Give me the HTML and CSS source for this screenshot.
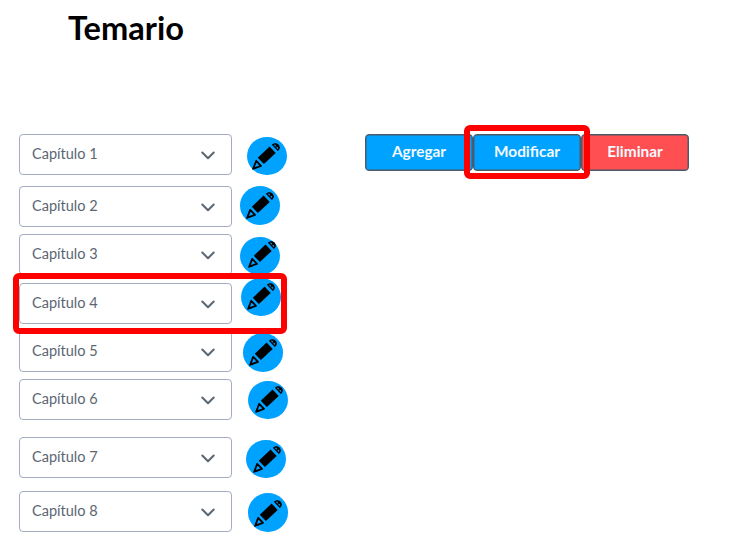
FILE: index.html
```html
<!DOCTYPE html>
<html lang="es">
<head>
<meta charset="utf-8">
<title>Temario</title>
<link rel="stylesheet" href="styles.css">
</head>
<body>
<svg width="0" height="0" class="defs">
  <symbol id="pencil" viewBox="0 0 28 27">
    <path d="M5.8 14.8 17.6 3.6 23.7 9.9 11.9 21Z"/>
    <path class="line" d="M4.2 17.8 1.3 25.6 9 22.8Z"/>
    <path d="M.2 26.8 1.8 22.6 4.8 25.2Z"/>
    <path d="M19.8 1.8C21.6 -.4 24.6 -.3 26.5 1.6 28.6 3.8 28.1 6.2 25.8 8Z"/>
    <path class="shine" d="M22.8 2.2 23.4 2.8M25 4.4 25.6 5"/>
  </symbol>
  <symbol id="chevron" viewBox="0 0 14 9"><path class="chev" d="M1.3 1.5 7 7.2 12.7 1.5"/></symbol>
</svg>
<main class="page">
  <h1 class="title">Temario</h1>
  <div class="content">
    <section class="chapters">
      <div class="row r1"><div class="select"><span>Capítulo 1</span><svg class="arrow"><use href="#chevron"/></svg></div><button class="edit" aria-label="Editar"><svg class="pencil"><use href="#pencil"/></svg></button></div>
      <div class="row r2"><div class="select"><span>Capítulo 2</span><svg class="arrow"><use href="#chevron"/></svg></div><button class="edit" aria-label="Editar"><svg class="pencil"><use href="#pencil"/></svg></button></div>
      <div class="row r3"><div class="select"><span>Capítulo 3</span><svg class="arrow"><use href="#chevron"/></svg></div><button class="edit" aria-label="Editar"><svg class="pencil"><use href="#pencil"/></svg></button></div>
      <div class="row r4"><div class="select"><span>Capítulo 4</span><svg class="arrow"><use href="#chevron"/></svg></div><button class="edit" aria-label="Editar"><svg class="pencil"><use href="#pencil"/></svg></button><div class="mark"></div></div>
      <div class="row r5"><div class="select"><span>Capítulo 5</span><svg class="arrow"><use href="#chevron"/></svg></div><button class="edit" aria-label="Editar"><svg class="pencil"><use href="#pencil"/></svg></button></div>
      <div class="row r6"><div class="select"><span>Capítulo 6</span><svg class="arrow"><use href="#chevron"/></svg></div><button class="edit" aria-label="Editar"><svg class="pencil"><use href="#pencil"/></svg></button></div>
      <div class="row r7"><div class="select"><span>Capítulo 7</span><svg class="arrow"><use href="#chevron"/></svg></div><button class="edit" aria-label="Editar"><svg class="pencil"><use href="#pencil"/></svg></button></div>
      <div class="row r8"><div class="select"><span>Capítulo 8</span><svg class="arrow"><use href="#chevron"/></svg></div><button class="edit" aria-label="Editar"><svg class="pencil"><use href="#pencil"/></svg></button></div>
    </section>
    <div class="actions">
      <button class="action">Agregar</button>
      <div class="marked"><button class="action">Modificar</button><div class="mark"></div></div>
      <button class="action danger">Eliminar</button>
    </div>
  </div>
</main>
</body>
</html>
```
FILE: styles.css
```css
* { box-sizing: border-box; }
body { margin: 0; background: #fff; font-family: Lato, sans-serif; }
.defs { display: block; }
.page { height: 544px; overflow: hidden; }
.title { margin: 0; padding: 8px 0 0 68px; height: 134px; font-size: 32.6px; line-height: 40px; font-weight: 700; color: #000; }
.content { display: flex; align-items: flex-start; padding-left: 19px; }
.chapters { width: 346px; }
.row { --gap: 15px; --drop: 2px; --px: 6px; --py: 6px; position: relative; display: flex; align-items: flex-start; height: 41px; }
.select { display: flex; align-items: center; justify-content: space-between; width: 213px; height: 41px; padding: 0 16px 2px 12px; border: 1px solid #a3adc2; border-radius: 4px; background: #fff; font-size: 14.5px; color: #5b6673; }
.arrow { width: 14px; height: 9px; margin-top: 4px; }
.chev { fill: none; stroke: #5b6673; stroke-width: 2; stroke-linecap: round; stroke-linejoin: round; }
.edit { flex: none; width: 40px; height: 38.6px; margin: var(--drop) 0 0 var(--gap); padding: var(--py) 0 0 var(--px); border: 0; border-radius: 50%; background: #00a2ff; display: flex; align-items: flex-start; justify-content: flex-start; }
.pencil { flex: none; width: 28px; height: 27px; }
.line { fill: none; stroke: #000; stroke-width: 1.8; stroke-linejoin: round; }
.shine { fill: none; stroke: #00a2ff; stroke-width: 1.2; stroke-linecap: round; }
.r1 { --gap: 14.6px; --drop: 2.6px; --px: 5.7px; --py: 6.3px; }
.r2 { --gap: 8.3px; --drop: 0px; --px: 5.4px; --py: 6.3px; margin-top: 11px; }
.r3 { --gap: 7.5px; --drop: 2.8px; --px: 8.5px; --py: 4.2px; margin-top: 7px; }
.r4 { --gap: 9.2px; --drop: -5.5px; --px: 6.1px; --py: 5.2px; margin-top: 8px; z-index: 1; }
.r5 { --gap: 10.7px; --drop: 2.2px; --px: 6px; --py: 6.3px; margin-top: 7px; }
.r6 { --gap: 16px; --drop: 1.5px; --px: 7px; --py: 5.3px; margin-top: 7px; }
.r7 { --gap: 13.8px; --drop: 2.8px; --px: 7.3px; --py: 6.2px; margin-top: 17px; }
.r8 { --gap: 16px; --drop: 2.2px; --px: 6.3px; --py: 6.6px; margin-top: 13px; }
.mark { position: absolute; border: 6px solid #f00; border-radius: 6px; pointer-events: none; }
.row .mark { left: -6px; top: -10px; width: 274px; height: 61px; }
.actions { display: flex; }
.action { display: block; width: 108px; height: 37px; padding: 0 0 3px; border: 1px solid #4c5b6b; box-shadow: inset 0 0 0 .5px #4c5b6b; border-radius: 4px; background: #00a2ff; color: #f2faff; font: 700 15.4px Lato, sans-serif; }
.danger { background: #ff4f52; }
.marked { position: relative; z-index: 1; }
.marked .mark { left: -9px; top: -9px; width: 126px; height: 54px; }
```
